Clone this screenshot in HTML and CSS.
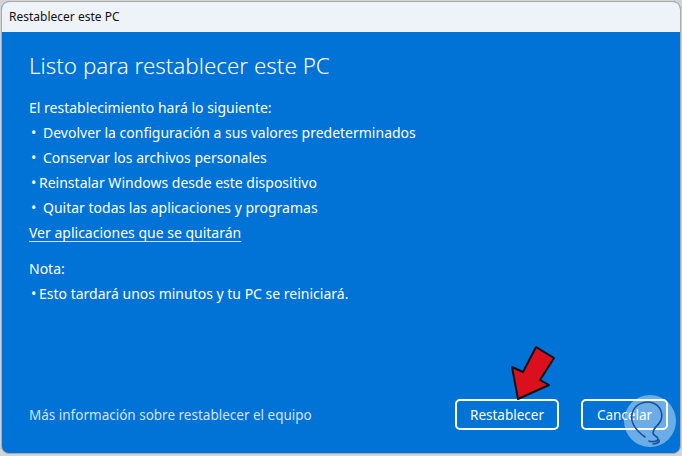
FILE: index.html
```html
<!doctype html>
<html lang="es">
    <head>
        <meta charset="utf-8">
        <title>Restablecer este PC</title>
        <link rel="stylesheet" href="styles.css">
    </head>
    <body>
        <div class="window">
            <div class="titlebar">Restablecer este PC</div>
            <div class="content">
                <h1>Listo para restablecer este PC</h1>
                <p class="lead">El restablecimiento hará lo siguiente:</p>
                <ul class="items">
                    <li><span class="dot">•</span><span class="wide">Devolver la configuración a sus valores predeterminados</span></li>
                    <li><span class="dot">•</span><span class="wide">Conservar los archivos personales</span></li>
                    <li><span class="dot">•</span>Reinstalar Windows desde este dispositivo</li>
                    <li><span class="dot">•</span><span class="wide">Quitar todas las aplicaciones y programas</span></li>
                </ul>
                <a class="link" href="#">Ver aplicaciones que se quitarán</a>
                <p class="note">Nota:</p>
                <p class="note-item"><span class="dot">•</span>Esto tardará unos minutos y tu PC se reiniciará.</p>
            </div>
            <div class="footer">
                <span class="more">Más información sobre restablecer el equipo</span>
                <div class="buttons">
                    <button class="btn">Restablecer</button>
                    <button class="btn">Cancelar</button>
                </div>
            </div>
            <svg class="arrow" width="60" height="66" viewBox="505 340 60 66">
                <polygon points="517,398 511,366 522,371 535,346 553,357 539,379 548,384" fill="#da101d" stroke="#111" stroke-width="2" stroke-linejoin="round"/>
            </svg>
            <svg class="mark" width="54" height="54" viewBox="0 0 54 54">
                <circle cx="27" cy="27" r="26" fill="rgba(255,255,255,0.42)"/>
                <path d="M22 43 C15 38 7 30 9 20 C11 10 22 6 30 9 C38 12 41 21 37 28 C34 33 30 34 30 39 C30 42 35 42 35 45 C35 48 28 48 26 47 M30 50 C34 50 37 48 36 46" fill="none" stroke="#1b4f9a" stroke-width="1.6" stroke-linecap="round"/>
            </svg>
        </div>
    </body>
</html>
```

FILE: styles.css
```css
html, body { margin: 0; padding: 0; }
body { background: #d4d4d4; font-family: "Noto Sans", "Open Sans", sans-serif; width: 682px; height: 456px; overflow: hidden; }

.window { position: relative; margin: 1px 0 0 1px; width: 678px; height: 451px; border: 1px solid #a9a9a9; border-radius: 8px; overflow: hidden; background: #0172d6; display: flex; flex-direction: column; }
.titlebar { height: 30px; flex: none; background: #eef2f9; color: #111; font-size: 12px; line-height: 30px; padding-left: 7px; }

.content { flex: 1; padding: 17px 27px 0; color: #fff; }
.content h1 { margin: 0 0 12px; font-size: 22.4px; font-weight: 300; line-height: 34px; }
.content p { margin: 0; }
.lead, .items li, .note, .note-item { font-size: 14px; line-height: 25px; }
.items { list-style: none; margin: 0; padding: 0; }
.items li { display: flex; }
.dot { display: inline-block; box-sizing: border-box; width: 10px; padding-left: 2px; }
.wide { margin-left: 4px; }
.link { display: block; color: #fff; font-size: 14px; line-height: 25px; text-decoration: underline; text-decoration-color: rgba(255,255,255,0.8); text-underline-offset: 3px; }
.note { margin-top: 11px !important; }

.footer { flex: none; display: flex; align-items: center; justify-content: space-between; padding: 0 12px 23px 27px; }
.more { color: #d2e3f7; font-size: 13.5px; }
.buttons { display: flex; gap: 22px; }
.btn { height: 31px; border: 2px solid #fff; border-radius: 5px; background: transparent; color: #fff; font-family: inherit; font-size: 13.5px; padding: 0 10px; }
.btn:first-child { width: 104px; }
.btn:last-child { width: 87px; }

.arrow { position: absolute; left: 504px; top: 339px; }
.mark { position: absolute; left: 621px; top: 392px; }
```
